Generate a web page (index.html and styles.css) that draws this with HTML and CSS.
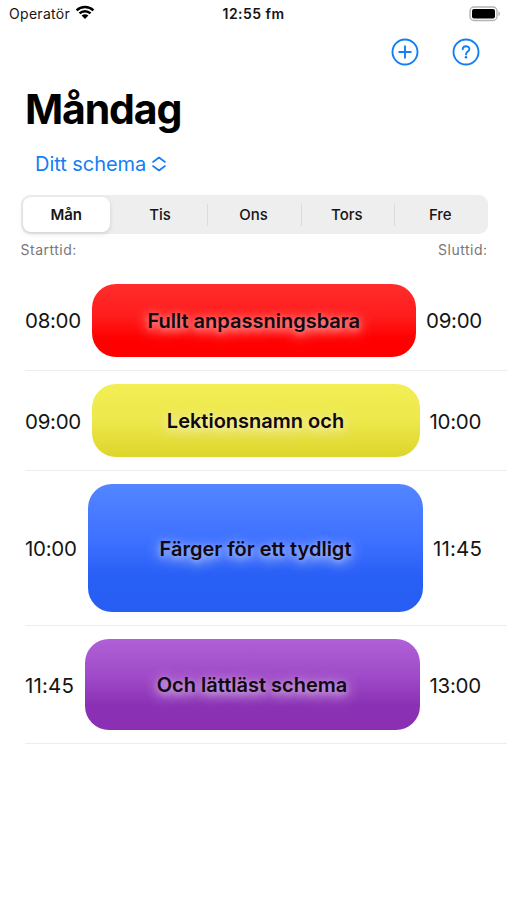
FILE: index.html
```
<!DOCTYPE html>
<html lang="sv">
<head>
<meta charset="utf-8">
<title>Schema</title>
<link rel="stylesheet" href="styles.css">
</head>
<body>
<header class="status">
  <div class="carrier"><span>Operatör</span>
    <svg class="wifi" width="20" height="15" viewBox="0 0 20 15"><path d="M1.6 5.3C6.3.8 13.7.8 18.4 5.3M4.5 8.4C7.6 5.5 12.4 5.5 15.5 8.4" fill="none" stroke="#000" stroke-width="2.5"/><path d="M6.6 10.6C8.5 8.9 11.5 8.9 13.4 10.6L10 14Z"/></svg>
  </div>
  <div class="clock">12:55 fm</div>
  <svg class="battery" width="32" height="16" viewBox="0 0 32 16"><rect x="1" y="1" width="27" height="13.5" rx="4" fill="#fff" stroke="#b3b3b3" stroke-width="1.4"/><rect x="3" y="3" width="23" height="9.5" rx="2"/><path d="M29.5 5.4C31.4 6 31.4 9.5 29.5 10.1Z" fill="#aaa"/></svg>
</header>
<nav class="toolbar">
  <svg width="28" height="28" viewBox="0 0 28 28"><circle cx="14" cy="14" r="12.5"/><path d="M14 8.2V19.8M8.2 14H19.8"/></svg>
  <svg width="28" height="28" viewBox="0 0 28 28"><circle cx="14" cy="14" r="12.5"/><path d="M10.7 11.2C10.8 7.3 17.4 7.3 17.4 11.1C17.4 13.7 14 13.5 14 16.5"/><circle class="dot" cx="14" cy="19.3" r="1.3"/></svg>
</nav>
<h1>Måndag</h1>
<div class="picker"><span>Ditt schema</span><svg width="14" height="16" viewBox="0 0 14 16"><path d="M1 6L7 1.5L13 6M1 10L7 14.5L13 10"/></svg></div>
<div class="segments">
  <div class="segment selected">Mån</div>
  <div class="segment">Tis</div>
  <div class="segment">Ons</div>
  <div class="segment">Tors</div>
  <div class="segment">Fre</div>
</div>
<div class="captions"><span>Starttid:</span><span>Sluttid:</span></div>
<main class="lessons">
  <section class="lesson short"><time class="wide">08:00</time><div class="card red"><span>Fullt anpassningsbara</span></div><time class="wide">09:00</time></section>
  <section class="lesson short"><time class="wide">09:00</time><div class="card yellow"><span>Lektionsnamn och</span></div><time>10:00</time></section>
  <section class="lesson long"><time>10:00</time><div class="card blue"><span>Färger för ett tydligt</span></div><time class="narrow">11:45</time></section>
  <section class="lesson medium"><time class="narrow">11:45</time><div class="card purple"><span>Och lättläst schema</span></div><time>13:00</time></section>
</main>
</body>
</html>
```
FILE: styles.css
```
* { box-sizing: border-box; }
body { margin: 0; height: 900px; background: #fff; color: #151515; font-family: Inter, "Liberation Sans", sans-serif; white-space: nowrap; overflow: hidden; }
svg { display: block; flex: none; }
.status { display: grid; grid-template-columns: 1fr 68px 1fr; align-items: center; height: 27px; padding: 0 6px 0 9px; font-size: 14px; }
.carrier { display: flex; align-items: center; gap: 5px; letter-spacing: .3px; }
.wifi { margin-top: -2px; }
.clock { font-weight: 600; text-align: center; letter-spacing: .45px; margin-left: -3px; }
.battery { justify-self: end; }
.toolbar { display: flex; justify-content: flex-end; gap: 33px; height: 49px; padding: 11px 27px 0 0; }
.toolbar svg, .picker svg { fill: none; stroke: #147ef5; stroke-width: 1.9; stroke-linecap: round; stroke-linejoin: round; }
.toolbar .dot { fill: #147ef5; stroke: none; }
.picker svg { stroke-width: 1.6; }
h1 { margin: 0; height: 66px; padding-left: 25px; line-height: 66px; font-size: 41px; font-weight: 700; letter-spacing: -1.15px; color: #000; }
.picker { display: flex; align-items: center; gap: 6px; height: 44px; padding-left: 35px; font-size: 20px; color: #147ef5; }
.picker span { letter-spacing: -.05px; }
.segments { display: grid; grid-template-columns: repeat(5, 1fr); width: 467px; height: 39px; margin: 9px 0 0 20.5px; border-radius: 9px; background: #eee; }
.segment { display: flex; align-items: center; justify-content: center; padding-right: 1px; font-size: 15px; font-weight: 500; }
.segment + .segment + .segment { background: linear-gradient(#dcdcdc, #dcdcdc) left center / 1px 22px no-repeat; }
.selected { margin: 2px 4px 2px 2px; padding-right: 0; border-radius: 8px; background: #fff; font-weight: 600; box-shadow: 0 2px 5px rgba(0, 0, 0, .12); }
.captions { display: flex; justify-content: space-between; height: 36.6px; padding: 5.5px 19.5px 0 20.5px; font-size: 14px; line-height: 20px; letter-spacing: .5px; color: #777; }
.lesson { display: flex; align-items: center; gap: 10px; margin-left: 25px; padding-right: 24.5px; border-bottom: 1px solid #ededed; }
.short { height: 100.3px; }
.long { height: 155px; }
.medium { height: 118px; }
.lesson time { width: 53px; font-size: 20.5px; letter-spacing: -.3px; }
.lesson .wide { width: 56.5px; }
.lesson .narrow { width: 49.5px; }
.lesson .narrow { letter-spacing: .15px; }
.card { display: flex; align-items: center; justify-content: center; flex: 1; height: 73px; border-radius: 24px; font-size: 20px; font-weight: 600; color: #100812; text-shadow: 0 2px 6px rgba(255, 255, 255, .4), 0 3px 14px rgba(255, 255, 255, .6), 0 3px 18px rgba(255, 255, 255, .4); }
.lesson time, .card span { padding-top: 1px; }
.long .card { height: 128px; }
.medium .card { height: 91.5px; }
.red { background: linear-gradient(#ff2d2d, #ff1c1c 45%, #fe0000 75%); }
.yellow { background: linear-gradient(#f2ee54, #ede84b 50%, #ddd52b); }
.blue { background: linear-gradient(#5386ff, #3d70ff 45%, #285ff5 72%, #275df3); }
.purple { background: linear-gradient(#b060d6, #a04bc9 40%, #8b31b5 72%, #8a2fb2); }
```
